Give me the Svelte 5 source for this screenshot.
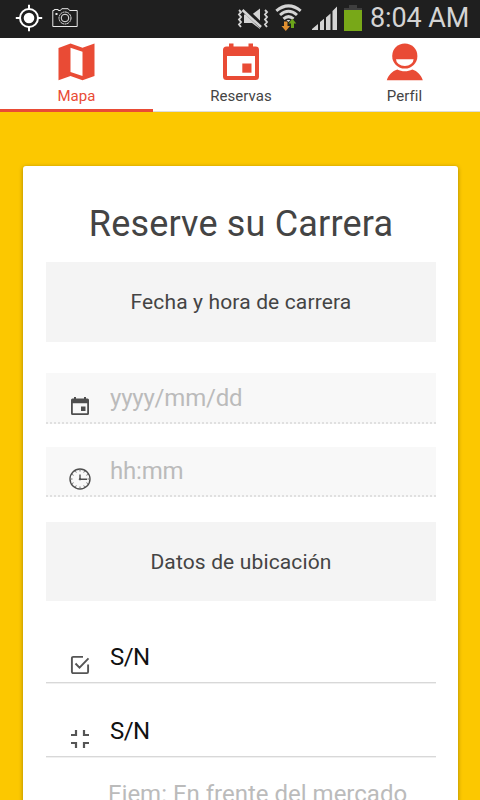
<script>
  let activeTab = $state('mapa');
  let date = $state('');
  let time = $state('');
  let number = $state('S/N');
  let crossing = $state('S/N');
  let reference = $state('');

  const tabs = [
    { id: 'mapa', label: 'Mapa' },
    { id: 'reservas', label: 'Reservas' },
    { id: 'perfil', label: 'Perfil' }
  ];

  // Minute marks of the clock icon
  const ticks = [0, 30, 60, 90, 120, 150, 180, 210, 240, 270, 300, 330];
</script>

<main class="screen">
  <header class="status">
    <svg class="gps" width="28" height="28" viewBox="0 0 28 28">
      <circle cx="14" cy="14" r="5.3" fill="#fff" />
      <circle cx="14" cy="14" r="9" fill="none" stroke="#fff" stroke-width="2" />
      <path d="M14 .8V5M14 23v4.2M.8 14H5M23 14h4.2" stroke="#fff" stroke-width="2" />
    </svg>
    <svg class="camera" width="26" height="20" viewBox="0 0 26 20" fill="none" stroke="#e8e8e8">
      <path d="M.8 2.5h1.4v-1h4v1h2.2L9.8.7h6.4l1.4 1.8h7.6v16H.8z" />
      <circle cx="13" cy="10" r="6" stroke-dasharray="2 .5" />
      <circle cx="13" cy="10" r="3.8" />
      <path d="M3.5 6h2" stroke-width="2" />
    </svg>
    <div class="spacer"></div>
    <svg class="mute" width="33" height="22" viewBox="0 0 33 22">
      <path d="M7 6.500h8l8-6v20.500l-8-6H7z" fill="#d4d4d4" />
      <path d="M6 0l19 18.500" stroke="#1f1f1f" stroke-width="5.500" />
      <path d="M5.500 2l18.500 17" stroke="#d4d4d4" stroke-width="2.600" />
      <path d="M2 2l2 2-2 2.500 2 2.500-2 2.500 2 2.500-2 2.500 2 2.500M28 2l2 2-2 2.500 2 2.500-2 2.500 2 2.500-2 2.500 2 2.500" fill="none" stroke="#d4d4d4" stroke-width="1.900" />
    </svg>
    <svg class="wifi" width="28" height="28" viewBox="0 0 28 28">
      <g fill="none" stroke="#d4d4d4" stroke-width="3">
        <path d="M1.300 6.800Q13.500-3 25.700 6.800" />
        <path d="M5 11Q13.500 3.500 22 11" />
        <path d="M8.500 14.800Q13.500 10.500 18.500 14.800" />
      </g>
      <path d="M11.500 16h4l-2 2z" fill="#d4d4d4" />
      <path d="M9 17.500h3.500v4.500H15l-4.200 5-4.300-5H9z" fill="#e09030" />
      <path d="M16 24v-4.500h-2.500l3.900-4.700 3.900 4.700H19V24z" fill="#6ba51a" />
    </svg>
    <svg class="signal" width="26" height="24" viewBox="0 0 26 24" fill="#d4d4d4">
      <path d="M0 24v-1l6-5v6zM8 24v-8l4-3.300V24zM14 24V11.500l4.500-4V24zM20.500 24V5L25 .5V24z" />
    </svg>
    <svg class="battery" width="18" height="26" viewBox="0 0 18 26">
      <path d="M5 0h8v3h5v2H0V3h5z" fill="#3e3e3e" />
      <path d="M0 5h18v21H0z" fill="#78a818" />
    </svg>
    <span class="clock">8:04 AM</span>
  </header>

  <nav class="tabs">
    {#each tabs as tab}
      <button
        type="button"
        class="tab {tab.id}"
        class:active={activeTab === tab.id}
        onclick={() => (activeTab = tab.id)}
      >
        <svg width="38" height="38" viewBox="0 0 38 38">
          {#if tab.id === 'mapa'}
            <path d="M.5 5l12-4.500 12 4.200L36.500.5V33l-12 4.200-12-4.200-12 4.200z" fill="#e94b35" />
            <path d="M12.500 4.700l12 4.100V33l-12-4z" fill="#fff" />
          {:else if tab.id === 'reservas'}
            <path d="M7 .5h4.500v3h15v-3H31v3h2.500A3.500 3.500 0 0 1 37 7v26.500A3.500 3.500 0 0 1 33.500 37h-29A3.500 3.500 0 0 1 1 33.500V7a3.500 3.500 0 0 1 3.500-3.500H7z" fill="#e94b35" />
            <path d="M5 13h28v20H5z" fill="#fff" />
            <path d="M20.300 20.500h9.200v9.200h-9.200z" fill="#e94b35" />
          {:else}
            <circle cx="18.800" cy="13" r="12.600" fill="#e94b35" />
            <path d="M10 16.300h17.600a8.800 6.600 0 0 1-17.600 0z" fill="#fff" />
            <path d="M.8 37.200c1.700-5 5.500-9.300 10.500-10.700 4.500 2.400 10.500 2.400 15 0 5 1.400 8.800 5.700 10.500 10.700z" fill="#e94b35" />
          {/if}
        </svg>
        <span>{tab.label}</span>
      </button>
    {/each}
  </nav>

  <form class="card">
    <h1>Reserve su Carrera</h1>

    <h2>Fecha y hora de carrera</h2>
    <label class="field dotted date">
      <svg width="24" height="24" viewBox="0 0 24 24">
        <path d="M6 3h2v1.500h8V3h2v1.500h1.500A1.500 1.500 0 0 1 21 6v13.500a1.500 1.500 0 0 1-1.500 1.500h-15A1.500 1.500 0 0 1 3 19.500V6a1.500 1.500 0 0 1 1.500-1.500H6zM4.800 9.200v10h14.400v-10zM13 12.500h4.500V17H13z" fill="#4e4e4e" fill-rule="evenodd" />
      </svg>
      <input type="text" placeholder="yyyy/mm/dd" bind:value={date} />
    </label>
    <label class="field dotted time">
      <svg width="24" height="24" viewBox="0 0 24 24" fill="none" stroke="#4e4e4e">
        <circle cx="12" cy="12" r="10" stroke-width="1.400" />
        {#each ticks as angle}
          <path d="M12 3v1.500" stroke-width=".8" transform="rotate({angle} 12 12)" />
        {/each}
        <path d="M12 7.500v4.800h7" stroke-width="1.400" />
        <circle cx="12" cy="12.200" r=".8" />
      </svg>
      <input type="text" placeholder="hh:mm" bind:value={time} />
    </label>

    <h2 class="location">Datos de ubicación</h2>
    <label class="field number">
      <svg width="24" height="24" viewBox="0 0 24 24" fill="none" stroke="#555" stroke-width="1.900">
        <path d="M15 3.900H5.200A1.300 1.300 0 0 0 3.900 5.200v13.600a1.300 1.300 0 0 0 1.300 1.300h13.600a1.300 1.300 0 0 0 1.300-1.300V11.500" />
        <path d="M7.500 10.500l4 4.200 9-9.400" />
      </svg>
      <input type="text" bind:value={number} />
    </label>
    <label class="field crossing">
      <svg width="24" height="24" viewBox="0 0 24 24" fill="none" stroke="#555" stroke-width="2.200">
        <path d="M8 3v5H3M16 3v5h5M8 21v-5H3M16 21v-5h5" />
      </svg>
      <input type="text" bind:value={crossing} />
    </label>
    <textarea placeholder="Ejem: En frente del mercado" bind:value={reference}></textarea>
  </form>
</main>

<style>
  :global(body) {
    margin: 0;
    background: #fcc800;
  }

  .screen {
    width: 480px;
    height: 800px;
    overflow: hidden;
    box-sizing: border-box;
    background: #fcc800;
    color: #444;
    font-family: Roboto, sans-serif;
  }

  /* Status bar */
  .status {
    display: flex;
    align-items: flex-start;
    height: 38px;
    box-sizing: border-box;
    padding-left: 15px;
    background: #1f1f1f;
  }

  .status svg {
    flex: none;
  }

  .gps {
    margin-top: 4px;
  }

  .camera {
    margin: 8px 0 0 9px;
  }

  .spacer {
    flex: 1;
  }

  .mute {
    margin: 8px 5px 0 0;
  }

  .wifi {
    margin: 4px 9px 0 0;
  }

  .signal {
    margin: 6px 6px 0 0;
  }

  .battery {
    margin: 5px 0 0;
  }

  .clock {
    width: 110px;
    margin-left: 8px;
    color: #d4d4d4;
    font-size: 27px;
    line-height: 36px;
    letter-spacing: -.1px;
    white-space: nowrap;
  }

  /* Tabs */
  .tabs {
    display: grid;
    grid-template-columns: 153px 176px 151px;
    height: 74px;
    box-sizing: border-box;
    background: #fff;
    box-shadow: inset 0 -1px #ddd;
  }

  .tab {
    display: flex;
    flex-direction: column;
    align-items: center;
    box-sizing: border-box;
    padding: 5px 0 0;
    border: 0;
    border-bottom: 3px solid transparent;
    background: none;
    color: #444;
    font: 15px/18px Roboto, sans-serif;
    letter-spacing: .05px;
  }

  .tab span {
    margin-top: 6px;
  }

  .tab.active {
    border-bottom-color: #e94b35;
    color: #e94b35;
  }

  /* Booking card */
  .card {
    width: 435px;
    height: 700px;
    box-sizing: border-box;
    margin: 54px 0 0 23px;
    padding: 35px 22px 0 23px;
    border-radius: 3px;
    background: #fff;
    box-shadow: 0 1px 4px rgba(0, 0, 0, .35);
  }

  h1 {
    margin: 0 0 15px;
    font-size: 36px;
    font-weight: 400;
    line-height: 46px;
    text-align: center;
    letter-spacing: .17px;
  }

  h2 {
    height: 80px;
    margin: 0;
    background: #f4f4f4;
    font-size: 21px;
    font-weight: 400;
    line-height: 81px;
    text-align: center;
    letter-spacing: .14px;
  }

  .field {
    display: flex;
    height: 50px;
    box-sizing: border-box;
    padding-left: 22px;
    border-bottom: 1px solid #d8d8d8;
    box-shadow: 0 1px #f0f0f0;
  }

  .field.dotted {
    border-bottom: 2px dotted #e0e0e0;
    background: #f8f8f8;
    box-shadow: none;
  }

  .field.date {
    height: 51px;
    margin-top: 31px;
  }

  .field.time {
    margin-top: 23px;
  }

  .field.number {
    margin-top: 32px;
  }

  .field.crossing {
    margin-top: 24px;
  }

  h2.location {
    height: 79px;
    margin-top: 25px;
    line-height: 80px;
  }

  .field svg {
    flex: none;
    margin: 20px 18px 0 0;
  }

  .field.date svg {
    margin-top: 21px;
  }

  .field input {
    flex: 1;
    min-width: 0;
    height: 48px;
    padding: 0;
    border: 0;
    outline: 0;
    background: none;
    color: #111;
    font: 24px Roboto, sans-serif;
    letter-spacing: -.2px;
  }

  .field.date input {
    height: 50px;
  }

  .number input,
  .crossing input {
    letter-spacing: -.6px;
  }

  textarea {
    display: block;
    width: 100%;
    box-sizing: border-box;
    margin-top: 22px;
    padding: 0 0 0 62px;
    border: 0;
    outline: 0;
    resize: none;
    font: 24px/30px Roboto, sans-serif;
  }

  input::placeholder,
  textarea::placeholder {
    color: #bbb;
  }
</style>
